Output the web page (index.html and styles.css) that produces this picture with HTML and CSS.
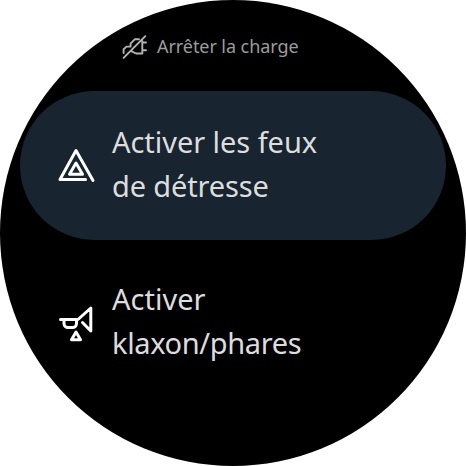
FILE: index.html
```html
<!DOCTYPE html>
<html lang="fr">
<head>
<meta charset="utf-8">
<title>Commandes</title>
<link rel="stylesheet" href="styles.css">
</head>
<body>
<main class="watch">
  <div class="item item-small">
    <svg class="icon-small" viewBox="0 0 26 26" width="26" height="26">
      <path d="M2.600 19V15.200L5.500 12.600H9.600V9.600L13.700 5.300H18M10.800 17.300L15 19.500H21.300V7M21.300 8.500H25M21.300 16.200H25M2.600 23.800L24.300 2.200"/>
    </svg>
    <span class="label-small">Arrêter la charge</span>
  </div>
  <div class="item item-card">
    <svg class="icon" viewBox="0 0 40 40" width="40" height="40">
      <path d="M29.500 33.500H4L20 4.500L37 34.500M20 17L13.500 28.300H26.500Z"/>
    </svg>
    <div class="label"><span class="line-a">Activer les feux</span><span class="line-b">de détresse</span></div>
  </div>
  <div class="item item-plain">
    <svg class="icon" viewBox="0 0 40 40" width="40" height="40">
      <path d="M4.500 16.500H22L34.800 5V28L26.500 19.500M8 17V20.500A4 4 0 0 0 12 24.500H16.500A4 4 0 0 0 20.500 20.500V17M20 29L15.500 36.800H24.500Z"/>
    </svg>
    <div class="label"><span class="line-c">Activer</span><span class="line-d">klaxon/phares</span></div>
  </div>
</main>
</body>
</html>
```
FILE: styles.css
```css
body {
  margin: 0;
  background: #fff;
  font-family: "Noto Sans", sans-serif;
}
.watch {
  width: 466px;
  height: 466px;
  box-sizing: border-box;
  padding: 34px 20px 0;
  border-radius: 50%;
  background: #000;
  overflow: hidden;
  color: #dcddde;
}
.item {
  display: flex;
  align-items: center;
}
.item-small {
  height: 26px;
  padding-left: 101px;
  margin-bottom: 31px;
  gap: 10px;
  color: #9c9c9c;
}
.label-small {
  font-size: 18px;
  line-height: 26px;
  padding-bottom: 2px;
  white-space: nowrap;
  letter-spacing: -0.07px;
}
.item-card,
.item-plain {
  height: 149px;
  box-sizing: border-box;
  padding-left: 36px;
  gap: 16px;
}
.item-card {
  border-radius: 75px;
  background: #18242f;
}
.item-plain {
  margin-top: 8px;
}
.label {
  font-size: 29px;
  line-height: 44px;
  padding-bottom: 4px;
}
.label span {
  display: block;
  white-space: nowrap;
  width: max-content;
}
.line-a {
  letter-spacing: -0.05px;
}
.line-b {
  letter-spacing: -0.15px;
}
.label .line-d {
  letter-spacing: -0.36px;
}
svg {
  flex: none;
  fill: none;
  stroke: currentColor;
  stroke-linejoin: round;
  stroke-linecap: round;
}
.icon {
  color: #fff;
  stroke-width: 3;
}
.icon-small {
  color: #b4b4b4;
  stroke-width: 1.9;
}
```
